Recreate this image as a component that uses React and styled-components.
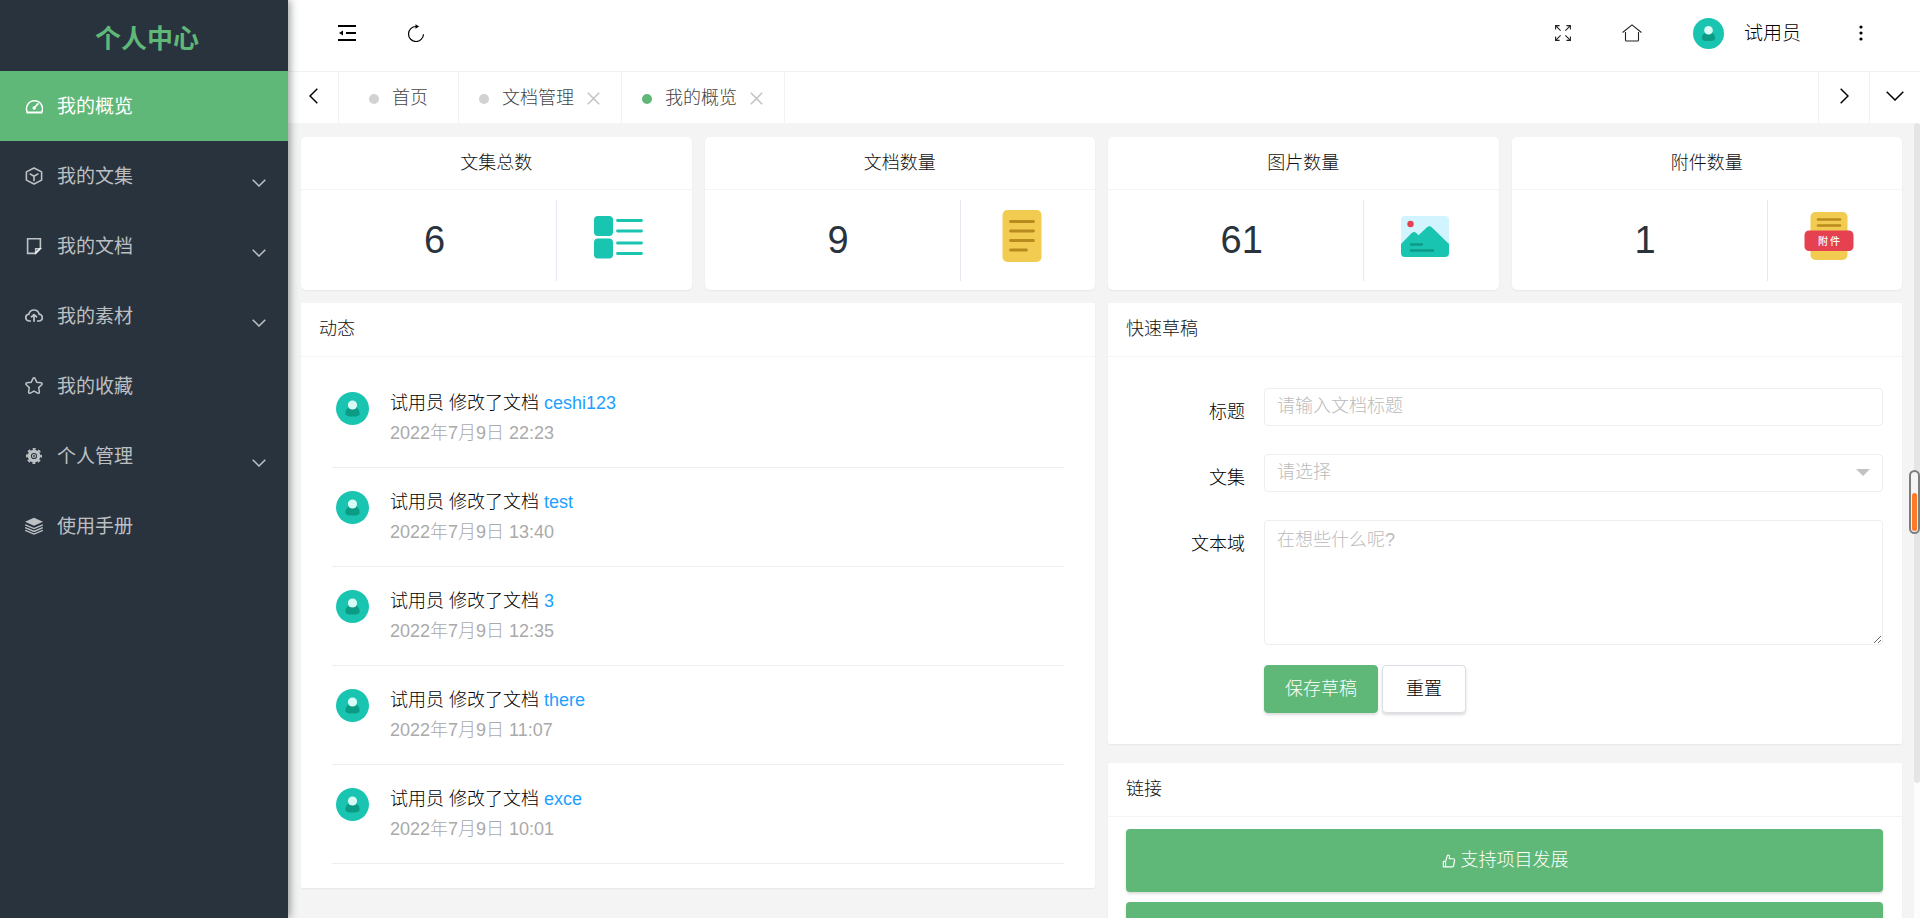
import React, { useState } from 'react'
import styled, { createGlobalStyle } from 'styled-components'
import { AiOutlineLike } from 'react-icons/ai'

const GlobalStyle = createGlobalStyle`
  * {
    box-sizing: border-box;
  }

  body {
    margin: 0;
    overflow: hidden;
    background: #f4f4f4;
    color: #000;
    font-family: 'Liberation Sans', 'Noto Sans CJK SC', sans-serif;
    font-size: 18px;
    font-weight: 300;
    line-height: 25px;
  }

  button, input, select, textarea {
    font: inherit;
    color: inherit;
  }

  a {
    text-decoration: none;
  }

  svg {
    display: block;
    flex: none;
  }
`

const Layout = styled.div`
  display: flex;
  height: 100vh;
`

const Sidebar = styled.aside`
  flex: none;
  width: 288px;
  background: #28333e;
  box-shadow: 2px 0 8px rgba(29, 35, 41, 0.45);
  z-index: 1;
`

const Logo = styled.h1`
  display: flex;
  align-items: center;
  justify-content: center;
  height: 71px;
  margin: 0;
  padding: 8px 0 0 6px;
  color: #5fb878;
  font-size: 26px;
  font-weight: 700;
`

const MenuLink = styled.a`
  display: flex;
  align-items: center;
  gap: 14px;
  height: 70px;
  padding: 0 22px 0 25px;
  font-size: 19px;
  font-weight: 400;
  color: ${props => (props.$active ? '#fff' : 'rgba(255, 255, 255, 0.7)')};
  background: ${props => (props.$active ? '#5fb878' : 'transparent')};
`

const MenuText = styled.span`
  flex: 1;
`

const MenuArrow = styled.span`
  padding-top: 14px;
`

const Main = styled.div`
  display: flex;
  flex: 1;
  flex-direction: column;
  min-width: 0;
`

const Header = styled.header`
  display: flex;
  flex: none;
  align-items: center;
  justify-content: space-between;
  height: 72px;
  padding: 0 50px 5px 50px;
  border-bottom: 1px solid #f2f2f2;
  background: #fff;
  color: #000;
`

const HeaderGroup = styled.div`
  display: flex;
  align-items: center;
  gap: 51px;
`

const IconButton = styled.button`
  display: flex;
  align-items: center;
  padding: 0;
  border: 0;
  background: none;
`

const User = styled.a`
  display: flex;
  align-items: center;
  gap: 20px;
  color: #000;
  font-size: 19px;
`

const TabBar = styled.nav`
  display: flex;
  flex: none;
  height: 51px;
  background: #fff;
`

const TabControl = styled.button`
  display: flex;
  align-items: center;
  justify-content: center;
  width: 51px;
  padding: 0 0 4px;
  border: solid #f2f2f2;
  border-width: ${props => (props.$side === 'left' ? '0 1px 0 0' : '0 0 0 1px')};
  background: none;
`

const TabList = styled.div`
  display: flex;
  flex: 1;
`

const Tab = styled.div`
  display: flex;
  align-items: center;
  gap: 13px;
  padding: ${props => (props.$closable ? '2px 21px 0 20px' : '2px 30px 0')};
  border-right: 1px solid #f2f2f2;
  color: #444;
`

const TabDot = styled.span`
  width: 10px;
  height: 10px;
  border-radius: 50%;
  background: ${props => (props.$active ? '#5fb878' : '#d2d2d2')};
`

const TabLink = styled.a`
  color: inherit;
`

const Viewport = styled.main`
  display: flex;
  flex: 1;
  min-height: 0;
  overflow: hidden;
`

const Content = styled.div`
  display: flex;
  flex: 1;
  flex-direction: column;
  gap: 13px;
  padding: 14px 12px 0 13px;
`

const ScrollTrack = styled.div`
  flex: none;
  width: 6px;
  background: #fdfdfd;
`

const ScrollThumb = styled.div`
  height: 83%;
  border-radius: 3px;
  background: #e5e5e5;
`

const StatRow = styled.div`
  display: grid;
  grid-template-columns: repeat(4, 1fr);
  gap: 13px;
`

const PanelRow = styled.div`
  display: grid;
  grid-template-columns: repeat(2, 1fr);
  align-items: start;
  gap: 13px;
`

const PanelColumn = styled.div`
  display: flex;
  flex-direction: column;
  gap: 19px;
`

const Card = styled.section`
  border-radius: ${props => (props.$round ? '5px' : '2px')};
  background: #fff;
  box-shadow: 0 1px 2px rgba(0, 0, 0, 0.06);
`

const CardTitle = styled.h2`
  height: ${props => (props.$center ? '53px' : '54px')};
  margin: 0;
  padding: 14px 18px 0;
  border-bottom: 1px solid #f4f4f4;
  color: #111;
  font-size: 18px;
  font-weight: 300;
  text-align: ${props => (props.$center ? 'center' : 'left')};
`

const StatBody = styled.div`
  display: grid;
  grid-template-columns: 2fr 1fr;
  height: 100px;
  padding: 10px 12px 9px;
`

const StatNumber = styled.div`
  display: flex;
  align-items: center;
  justify-content: center;
  border-right: 1px solid #e8e8f0;
  color: #28333e;
  font-size: 38px;
`

const StatIcon = styled.div`
  display: flex;
  align-items: center;
  justify-content: center;
  padding-bottom: 9px;
`

const Feed = styled.ul`
  margin: 0;
  padding: 12px 31px 24px;
  list-style: none;
`

const FeedItem = styled.li`
  display: flex;
  gap: 21px;
  height: 99px;
  padding: 22px 4px 0;
  border-bottom: 1px solid #eee;
`

const FeedAvatar = styled.div`
  padding-top: 1px;
`

const FeedText = styled.div`
  display: flex;
  flex-direction: column;
  gap: 5px;
`

const FeedLink = styled.a`
  color: #1e9fff;
`

const FeedTime = styled.time`
  color: #aaa;
`

const Form = styled.form`
  display: flex;
  flex-direction: column;
  padding: 31px 19px 31px 0;
`

const Field = styled.div`
  display: grid;
  grid-template-columns: 156px 1fr;
  align-items: start;
  min-height: 66px;
`

const Label = styled.label`
  padding: 12px 19px 0 0;
  text-align: right;
`

const Input = styled.input`
  width: 100%;
  height: 38px;
  padding: 0 12px 2px;
  border: 1px solid #eee;
  border-radius: 4px;
  outline: 0;
  background: #fff;

  &::placeholder {
    color: #bbb;
    opacity: 1;
  }
`

const SelectBox = styled.div`
  position: relative;
`

const Select = styled.select`
  width: 100%;
  height: 38px;
  padding: 0 12px 2px;
  border: 1px solid #eee;
  border-radius: 4px;
  appearance: none;
  outline: 0;
  background: #fff;
  color: #bbb;
`

const SelectArrow = styled.span`
  position: absolute;
  top: 15px;
  right: 13px;
  border: 7px solid transparent;
  border-top-color: #c2c2c2;
  pointer-events: none;
`

const Textarea = styled.textarea`
  display: block;
  width: 100%;
  height: 125px;
  padding: 7px 12px;
  border: 1px solid #eee;
  border-radius: 4px;
  outline: 0;
  resize: vertical;
  background: #fff;

  &::placeholder {
    color: #bbb;
    opacity: 1;
  }
`

const FormActions = styled.div`
  display: flex;
  gap: 4px;
  padding: 20px 0 0 156px;
`

const Button = styled.button`
  height: 48px;
  padding: 0 ${props => (props.$primary ? '20px' : '23px')};
  border: 1px solid ${props => (props.$primary ? '#5fb878' : '#dcdfe6')};
  border-radius: 4px;
  background: ${props => (props.$primary ? '#5fb878' : '#fff')};
  color: ${props => (props.$primary ? '#fff' : '#000')};
  box-shadow: 0 2px 3px rgba(0, 0, 0, 0.14);
`

const Links = styled.div`
  display: flex;
  flex-direction: column;
  gap: 10px;
  padding: 12px 19px 12px 18px;
`

const LinkButton = styled.a`
  display: flex;
  align-items: center;
  justify-content: center;
  gap: 4px;
  height: 63px;
  border-radius: 4px;
  background: #5fb878;
  color: #fff;
  box-shadow: 0 2px 3px rgba(0, 0, 0, 0.14);
`

const Gauge = styled.div`
  position: fixed;
  top: 470px;
  right: 0;
  display: flex;
  align-items: flex-end;
  width: 11px;
  height: 64px;
  padding: 1px;
  border: 2px solid #7d7d7d;
  border-radius: 6px;
  background: #f4f4f4;
  z-index: 2;
`

const GaugeLevel = styled.div`
  width: 100%;
  border-radius: 3px;
  background: #ff7a26;
`

const menuIcons = {
  overview: (
    <g fill="none" stroke="currentColor" strokeWidth="1.5">
      <path d="M2.2 15A8 8 0 1 1 16.8 15" />
      <path d="M1.4 15.500h16" strokeWidth="2" />
      <path d="M9 11l4.4-4.6" strokeWidth="1.8" />
      <circle cx="9.2" cy="11" r="1" fill="currentColor" />
    </g>
  ),
  cube: (
    <g fill="none" stroke="currentColor" strokeWidth="1.6" strokeLinejoin="round">
      <path d="M9 1l7.600 3.900v8.2L9 17l-7.600-3.900V4.9z" />
      <path d="M4.6 6.6L9 9.2l4.4-2.6M9 9.2v5" />
    </g>
  ),
  note: (
    <g fill="none" stroke="currentColor" strokeWidth="1.6">
      <path d="M2.600 1.8h12.8v9.6l-4.8 5h-8z" />
      <path d="M15.4 11.6h-4.8v4.6z" fill="currentColor" fillOpacity="0.4" strokeWidth="1.4" />
    </g>
  ),
  cloud: (
    <g fill="none" stroke="currentColor" strokeWidth="1.7">
      <path d="M6 14H4.400A3.400 3.400 0 0 1 3.900 7.200 5.200 5.200 0 0 1 14.100 7.200 3.400 3.400 0 0 1 13.800 14H12" />
      <path d="M9 14.800V7.800M6 10.200l3-2.600 3 2.600" strokeWidth="1.8" />
    </g>
  ),
  star: (
    <path
      d="M9 .8c.5 0 .9.300 1.100.8l1.700 3.600 4.200.6c1.100.1 1.400 1.200.7 1.900l-3 2.900.7 4.200c.2 1.100-.8 1.800-1.700 1.300L9 14.200l-3.700 1.900c-.9.500-1.900-.2-1.700-1.300l.7-4.200-3-2.900C.6 7 .9 5.900 2 5.800l4.200-.6 1.700-3.600C8.100 1.100 8.500.8 9 .8z"
      fill="none"
      stroke="currentColor"
      strokeWidth="1.5"
    />
  ),
  gear: (
    <g fill="none" stroke="currentColor">
      <circle cx="9" cy="9" r="4.700" strokeWidth="3.200" />
      <circle cx="9" cy="9" r="7.100" strokeWidth="1.800" strokeDasharray="3 2.576" strokeDashoffset="1.500" />
      <circle cx="9" cy="9" r="1.500" strokeWidth="1.200" />
    </g>
  ),
  layers: (
    <g>
      <path d="M9 .8l9 4-9 4-9-4z" fill="currentColor" />
      <path d="M.2 7.800L9 11.600l8.800-3.800M.2 10.600L9 14.400l8.800-3.800M.2 13.300L9 17.100l8.800-3.800" fill="none" stroke="currentColor" strokeWidth="1.400" />
    </g>
  )
}

const MenuIcon = ({ name }) => (
  <svg width="18" height="18" viewBox="0 0 18 18">{menuIcons[name]}</svg>
)

const Chevron = ({ width = 14, height = 8, d = 'M.7.7L7 7 13.300.7' }) => (
  <svg width={width} height={height} viewBox={`0 0 ${width} ${height}`} fill="none" stroke="currentColor" strokeWidth="1.5">
    <path d={d} />
  </svg>
)

const Avatar = ({ size }) => (
  <svg width={size} height={size} viewBox="0 0 33 33">
    <circle cx="16.500" cy="16.500" r="16.500" fill="#19c4b1" />
    <path d="M9.400 21.500c0-4.200 3-6.700 7.100-6.700s7.100 2.500 7.100 6.700c0 2.200-2.300 3.100-7.100 3.100s-7.100-.9-7.100-3.100z" fill="#0c9b85" />
    <circle cx="16.500" cy="13" r="4.600" fill="#d8fbf5" />
  </svg>
)

const CloseIcon = () => (
  <svg width="13" height="13" viewBox="0 0 13 13" stroke="#c2c2c2" strokeWidth="1.500">
    <path d="M.8.8l11.400 11.400M12.200.8L.8 12.200" />
  </svg>
)

const statIcons = {
  collection: (
    <g fill="#19c4b1">
      <rect x="4" y="8" width="19" height="20" rx="4" />
      <rect x="4" y="30.500" width="19" height="20" rx="4" />
      <path d="M27.500 12.500h24M27.500 23h24M27.500 35h24M27.500 45.500h24" stroke="#19c4b1" strokeWidth="2.800" strokeLinecap="round" />
    </g>
  ),
  document: (
    <g>
      <rect x="8.500" y="2" width="39" height="52" rx="5" fill="#f2cb51" />
      <path d="M16.500 13.500h23M16.500 23h23M16.500 32.500h23M16.500 42h16" stroke="#b98a1d" strokeWidth="2.800" strokeLinecap="round" />
    </g>
  ),
  image: (
    <g>
      <rect x="4" y="8" width="48" height="41" rx="4" fill="#d1f4ff" />
      <circle cx="13.500" cy="16" r="3.200" fill="#e64150" />
      <path d="M4 36l11-11.200q2-1.800 4 0l2.500 2.500 8.500-8q2.500-2.300 4.700 0L52 36v9q0 4-4 4H8q-4 0-4-4z" fill="#19c4b1" />
      <path d="M14 36.500h11M14 42.500h22" stroke="#0c9b85" strokeWidth="2.400" strokeLinecap="round" />
    </g>
  ),
  attachment: (
    <g>
      <rect x="9.500" y="4" width="37" height="48" rx="5" fill="#f2cb51" />
      <path d="M17 11.500h22M17 17.500h22" stroke="#b98a1d" strokeWidth="2.600" strokeLinecap="round" />
      <rect x="3.500" y="22.500" width="49" height="20.500" rx="4.500" fill="#e64150" />
      <text x="17" y="36.500" fontSize="10" fontWeight="500" fill="#fff">附</text>
      <text x="29" y="36.500" fontSize="10" fontWeight="500" fill="#fff">件</text>
    </g>
  )
}

const menu = [
  { text: '我的概览', icon: 'overview', active: true },
  { text: '我的文集', icon: 'cube', children: true },
  { text: '我的文档', icon: 'note', children: true },
  { text: '我的素材', icon: 'cloud', children: true },
  { text: '我的收藏', icon: 'star' },
  { text: '个人管理', icon: 'gear', children: true },
  { text: '使用手册', icon: 'layers' }
]

const tabs = [
  { text: '首页' },
  { text: '文档管理', closable: true },
  { text: '我的概览', closable: true, active: true }
]

const stats = [
  { title: '文集总数', value: 6, icon: 'collection' },
  { title: '文档数量', value: 9, icon: 'document' },
  { title: '图片数量', value: 61, icon: 'image' },
  { title: '附件数量', value: 1, icon: 'attachment' }
]

const activities = [
  { doc: 'ceshi123', time: '2022年7月9日 22:23' },
  { doc: 'test', time: '2022年7月9日 13:40' },
  { doc: '3', time: '2022年7月9日 12:35' },
  { doc: 'there', time: '2022年7月9日 11:07' },
  { doc: 'exce', time: '2022年7月9日 10:01' }
]

const SideMenu = () => (
  <Sidebar>
    <Logo>个人中心</Logo>
    <nav>
      {menu.map(item => (
        <MenuLink key={item.text} href="#" $active={item.active}>
          <MenuIcon name={item.icon} />
          <MenuText>{item.text}</MenuText>
          {item.children && <MenuArrow><Chevron /></MenuArrow>}
        </MenuLink>
      ))}
    </nav>
  </Sidebar>
)

const TopBar = () => (
  <Header>
    <HeaderGroup>
      <IconButton aria-label="收起菜单">
        <svg width="18" height="18" viewBox="0 0 18 18" stroke="#000" strokeWidth="2">
          <path d="M0 2h18M8 9h10M0 16h18" />
          <path d="M1 9l4-2.500v5z" stroke="none" />
        </svg>
      </IconButton>
      <IconButton aria-label="刷新">
        <svg width="18" height="18" viewBox="0 0 18 18" fill="none" stroke="#000" strokeWidth="1.200">
          <path d="M10 2.500H9A7.500 7.500 0 1 0 16.500 10.200" />
          <path d="M8.500.2l3.600 2.300-3.600 2.300z" fill="#000" stroke="none" />
        </svg>
      </IconButton>
    </HeaderGroup>
    <HeaderGroup>
      <IconButton aria-label="全屏">
        <svg width="16" height="16" viewBox="0 0 16 16" fill="none" stroke="#222" strokeWidth="1.100">
          <path d="M.6 4.600v-4h4M.6.6l5 5M11.400.6h4v4M15.400.6l-5 5M.6 11.400v4h4M.6 15.400l5-5M15.400 11.400v4h-4M15.400 15.400l-5-5" />
        </svg>
      </IconButton>
      <IconButton aria-label="首页">
        <svg width="20" height="18" viewBox="0 0 20 18" fill="none" stroke="#222" strokeWidth="1.100">
          <path d="M.6 8.500L10 .9l9.400 7.600" />
          <path d="M3.500 8v8q0 1 1 1h11q1 0 1-1V8" />
        </svg>
      </IconButton>
      <User href="#">
        <Avatar size={31} />
        试用员
      </User>
      <IconButton aria-label="更多">
        <svg width="18" height="18" viewBox="0 0 18 18" fill="#000">
          <circle cx="9" cy="3" r="1.600" />
          <circle cx="9" cy="9" r="1.600" />
          <circle cx="9" cy="15" r="1.600" />
        </svg>
      </IconButton>
    </HeaderGroup>
  </Header>
)

const Tabs = () => (
  <TabBar>
    <TabControl $side="left" aria-label="向左">
      <Chevron width={9} height={16} d="M8.300.7L1 8l7.300 7.300" />
    </TabControl>
    <TabList>
      {tabs.map(tab => (
        <Tab key={tab.text} $closable={tab.closable}>
          <TabDot $active={tab.active} />
          <TabLink href="#">{tab.text}</TabLink>
          {tab.closable && <IconButton aria-label="关闭"><CloseIcon /></IconButton>}
        </Tab>
      ))}
    </TabList>
    <TabControl $side="right" aria-label="向右">
      <Chevron width={9} height={16} d="M.7.7L8 8 .7 15.300" />
    </TabControl>
    <TabControl $side="right" aria-label="展开">
      <Chevron width={18} height={10} d="M.7.7L9 9 17.300.7" />
    </TabControl>
  </TabBar>
)

const DraftForm = () => {
  const [title, setTitle] = useState('')
  const [content, setContent] = useState('')

  return (
    <Form onSubmit={e => e.preventDefault()}>
      <Field>
        <Label htmlFor="title">标题</Label>
        <Input
          id="title"
          placeholder="请输入文档标题"
          value={title}
          onChange={e => setTitle(e.target.value)}
        />
      </Field>
      <Field>
        <Label htmlFor="project">文集</Label>
        <SelectBox>
          <Select id="project">
            <option>请选择</option>
          </Select>
          <SelectArrow />
        </SelectBox>
      </Field>
      <Field>
        <Label htmlFor="content">文本域</Label>
        <Textarea
          id="content"
          placeholder="在想些什么呢?"
          value={content}
          onChange={e => setContent(e.target.value)}
        />
      </Field>
      <FormActions>
        <Button type="submit" $primary>保存草稿</Button>
        <Button type="reset">重置</Button>
      </FormActions>
    </Form>
  )
}

const App = () => (
  <Layout>
    <GlobalStyle />
    <SideMenu />
    <Main>
      <TopBar />
      <Tabs />
      <Viewport>
        <Content>
          <StatRow>
            {stats.map(stat => (
              <Card key={stat.title} $round>
                <CardTitle $center>{stat.title}</CardTitle>
                <StatBody>
                  <StatNumber>{stat.value}</StatNumber>
                  <StatIcon>
                    <svg width="56" height="56" viewBox="0 0 56 56">{statIcons[stat.icon]}</svg>
                  </StatIcon>
                </StatBody>
              </Card>
            ))}
          </StatRow>
          <PanelRow>
            <Card>
              <CardTitle>动态</CardTitle>
              <Feed>
                {activities.map(item => (
                  <FeedItem key={item.doc}>
                    <FeedAvatar><Avatar size={33} /></FeedAvatar>
                    <FeedText>
                      <span>试用员 修改了文档 <FeedLink href="#">{item.doc}</FeedLink></span>
                      <FeedTime>{item.time}</FeedTime>
                    </FeedText>
                  </FeedItem>
                ))}
              </Feed>
            </Card>
            <PanelColumn>
              <Card>
                <CardTitle>快速草稿</CardTitle>
                <DraftForm />
              </Card>
              <Card>
                <CardTitle>链接</CardTitle>
                <Links>
                  <LinkButton href="#"><AiOutlineLike size={16} />支持项目发展</LinkButton>
                  <LinkButton href="#" aria-label="使用手册" />
                </Links>
              </Card>
            </PanelColumn>
          </PanelRow>
        </Content>
        <ScrollTrack>
          <ScrollThumb />
        </ScrollTrack>
      </Viewport>
    </Main>
    <Gauge>
      <GaugeLevel style={{ height: '66%' }} />
    </Gauge>
  </Layout>
)

export default App
